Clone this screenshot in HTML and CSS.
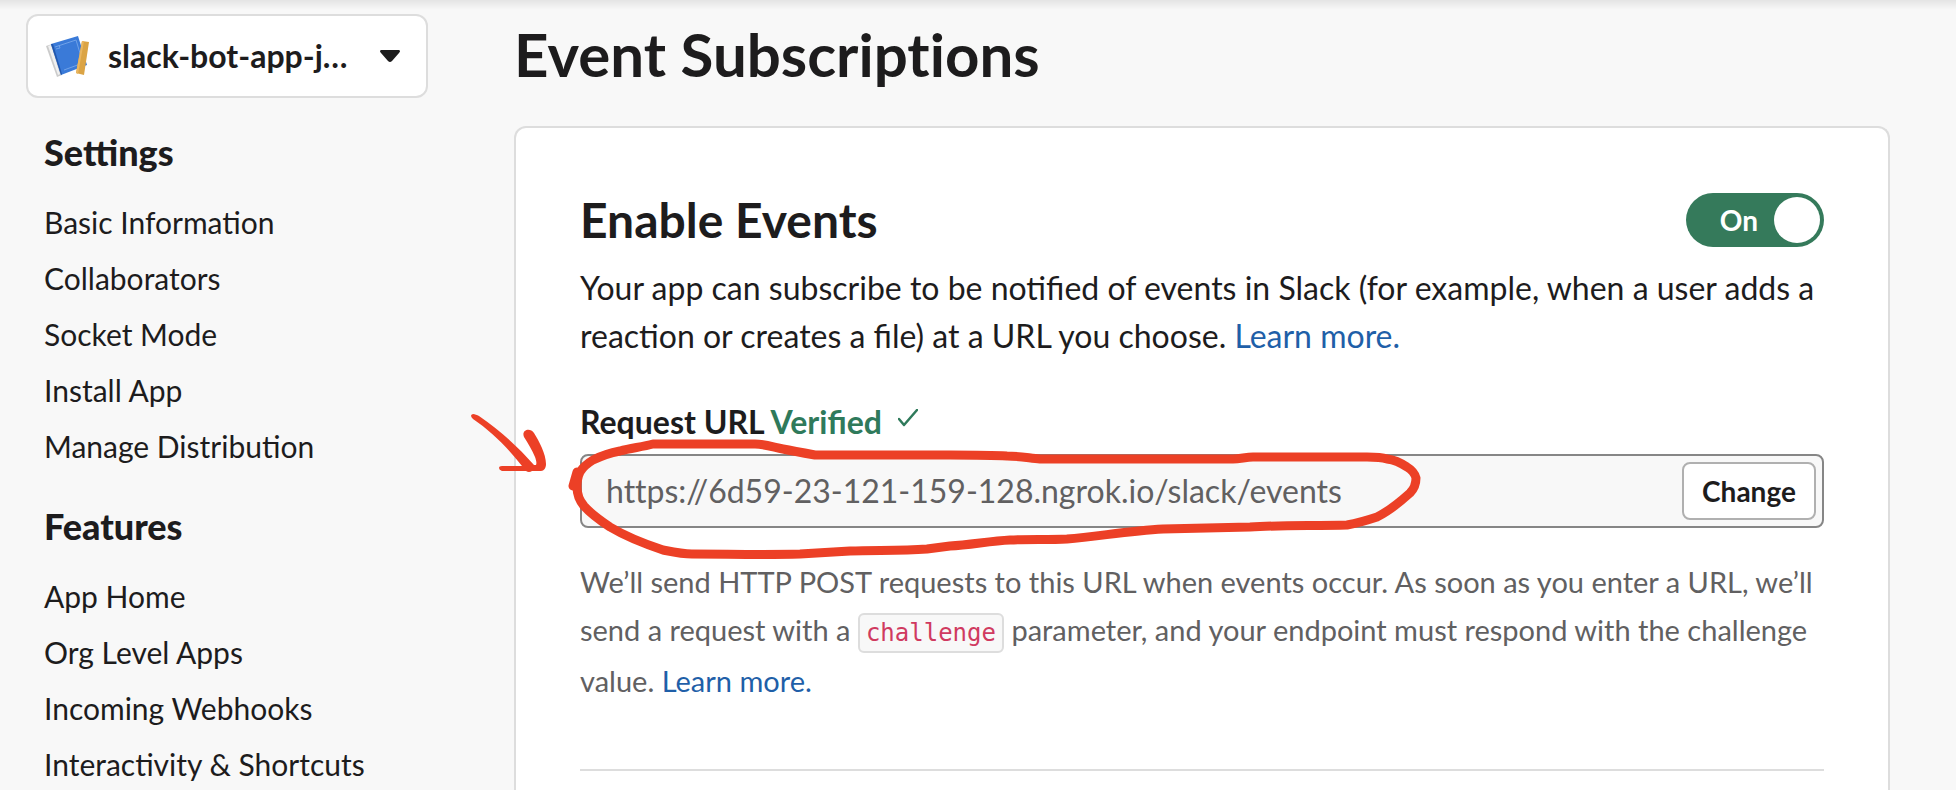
FILE: index.html
```html
<!DOCTYPE html>
<html lang="en">
<head>
<meta charset="utf-8">
<title>Event Subscriptions</title>
<link rel="stylesheet" href="styles.css">
</head>
<body>
<div class="layout">
  <aside class="sidebar">
    <button class="app-picker" type="button" aria-haspopup="listbox">
      <svg class="app-picker-icon" viewBox="0 0 44 44" aria-hidden="true">
        <path d="M0 12 L6 10 L16 41 L11 43 Z" fill="#cbcbcb"/>
        <path d="M2 12 L5 11 L14 40 L12 41 Z" fill="#f0f0f0"/>
        <path d="M5 10 L32 2 L41 31 L15 41 Z" fill="#3a7ad8"/>
        <path d="M5 10 L7 10 L16 40 L15 41 Z" fill="#2257ad"/>
        <path d="M9 13 L30 6 L37 29 L18 36 M10 15 L14 14 L13 11" fill="none" stroke="#6fa1e8" stroke-width="1"/>
        <path d="M36 7 L43 8 L38 41 L30 39 Z" fill="#dba445"/>
        <path d="M36 7 L38 7 L32 40 L30 39 Z" fill="#e9b660"/>
      </svg>
      <span class="app-picker-name">slack-bot-app-j…</span>
      <svg class="app-picker-caret" viewBox="0 0 20 12" aria-hidden="true">
        <path d="M1 0 H19 Q21 1 19 3 L12 11 Q10 13 8 11 L1 3 Q-1 1 1 0 Z" fill="#1d1c1d"/>
      </svg>
    </button>
    <nav class="nav">
      <section class="nav-group">
        <h2 class="nav-title">Settings</h2>
        <ul class="nav-list">
          <li><a href="#">Basic Information</a></li>
          <li><a href="#">Collaborators</a></li>
          <li><a href="#">Socket Mode</a></li>
          <li><a href="#">Install App</a></li>
          <li><a href="#">Manage Distribution</a></li>
        </ul>
      </section>
      <section class="nav-group">
        <h2 class="nav-title">Features</h2>
        <ul class="nav-list">
          <li><a href="#">App Home</a></li>
          <li><a href="#">Org Level Apps</a></li>
          <li><a href="#">Incoming Webhooks</a></li>
          <li><a href="#">Interactivity &amp; Shortcuts</a></li>
        </ul>
      </section>
    </nav>
  </aside>

  <main class="main">
    <h1 class="page-title">Event Subscriptions</h1>
    <section class="card">
      <header class="card-header">
        <h2 class="card-title">Enable Events</h2>
        <button class="toggle" type="button" role="switch" aria-checked="true" aria-label="Enable Events">
          <span class="toggle-text">On</span>
          <span class="toggle-knob"></span>
        </button>
      </header>
      <p class="intro">Your app can subscribe to be notified of events in Slack (for example, when a user adds a reaction or creates a file) at a URL you choose. <a class="link" href="#">Learn more.</a></p>

      <div class="field">
        <div class="field-label">
          <label for="request-url">Request URL</label>
          <span class="verified">Verified</span>
          <svg class="check" viewBox="0 0 20 18" aria-hidden="true">
            <path d="M1 10 L6 16 L19 1" fill="none" stroke="#2f7a5b" stroke-width="2.5" stroke-linecap="round" stroke-linejoin="round"/>
          </svg>
        </div>
        <div class="url-box">
          <input class="url-input" id="request-url" type="text" value="https://6d59-23-121-159-128.ngrok.io/slack/events" readonly>
          <button class="change" type="button">Change</button>
          <svg class="markup" viewBox="456 390 984 180" aria-hidden="true">
            <path class="markup-line" d="M577 472 L573 486 M580 472 C577 478 577 482 577 487 C577 494 579 500 584 506 C591 514 601 521 610 527 C625 536 645 544 663 550 C673 552 682 554 692 554 C728 554 764 555 800 554 C817 553 833 552 850 551 C876 550 900 551 927 549 L950 546 C970 545 990 541 1010 540 C1030 539 1048 540 1067 539 C1100 536 1130 531 1163 529 L1250 527 C1282 525 1315 526 1347 525 C1358 523 1368 520 1377 517 C1389 511 1400 502 1410 493 C1414 489 1416 484 1416 478 C1415 474 1412 470 1407 467 C1401 463 1395 460 1387 459 C1381 457 1374 457 1367 457 L1253 457 C1246 457 1240 459 1233 459 L1040 459 C1029 458 1018 456 1007 456 C990 455 970 455 950 455 L815 455 C804 453 793 451 783 449 C773 447 764 444 755 444 L653 444 C642 447 631 448 620 451 C610 453 601 456 593 460 C588 463 583 467 580 472"/>
            <path class="markup-fill" d="M473 414 C475 414 477 415 479 416 C500 430 520 449 534 465 H536 C537 463 536 460 535 457 C532 450 528 443 524 437 C521 430 530 427 534 433 C539 441 546 454 546 464 C546 468 544 471 541 471 H532 Q529 473 526 471 H502 Q499 470 499 468 Q499 466 502 466 H522 C508 448 491 431 473 419 Q469 415 473 414 Z"/>
          </svg>
        </div>
      </div>

      <p class="help">We’ll send HTTP POST requests to this URL when events occur. As soon as you enter a URL, we’ll send a request with a <code class="code">challenge</code> parameter, and your endpoint must respond with the challenge value. <a class="link" href="#">Learn more.</a></p>
      <hr class="divider">
    </section>
  </main>
</div>
</body>
</html>
```
FILE: styles.css
```css
*, *::before, *::after { box-sizing: border-box; }
html { scrollbar-width: none; }
body {
  margin: 0;
  background: #f8f8f8;
  color: #1d1c1d;
  font-family: Lato, "Open Sans", sans-serif;
  font-size: 32px;
  line-height: 48px;
}
h1, h2, p, ul { margin: 0; padding: 0; }
button, input { font: inherit; color: inherit; }
a { color: inherit; text-decoration: none; }

.layout {
  display: flex;
  gap: 86px;
  min-height: 100vh;
  padding: 14px 66px 0 26px;
  background: linear-gradient(#e4e4e4, #f8f8f8 10px);
}
.sidebar { flex: 0 0 402px; }
.app-picker {
  display: flex;
  align-items: center;
  width: 100%;
  height: 84px;
  padding: 0 26px 0 18px;
  border: 2px solid #dddddd;
  border-radius: 12px;
  background: #ffffff;
  font-weight: 700;
  text-align: left;
}
.app-picker-icon { flex: none; width: 44px; height: 44px; }
.app-picker-name { margin: 0 auto 0 18px; white-space: nowrap; }
.app-picker-caret { flex: none; width: 20px; height: 12px; }

.nav { padding: 30px 18px 0; }
.nav-group + .nav-group { margin-top: 28px; }
.nav-title {
  margin-bottom: 18px;
  font-size: 36px;
  font-weight: 900;
  line-height: 48px;
}
.nav-list { list-style: none; font-size: 30px; line-height: 56px; }

.main {
  display: flex;
  flex: 1;
  flex-direction: column;
  min-width: 0;
}
.page-title {
  margin-bottom: 32px;
  font-size: 60px;
  font-weight: 700;
  line-height: 80px;
  font-variant-ligatures: none;
}
.card {
  flex: 1;
  padding: 60px 64px 0;
  border: 2px solid #dddddd;
  border-bottom: 0;
  border-radius: 12px 12px 0 0;
  background: #ffffff;
}
.card-header { display: flex; justify-content: space-between; align-items: center; }
.card-title { font-size: 48px; font-weight: 700; line-height: 64px; }
.toggle {
  display: flex;
  align-items: center;
  justify-content: flex-end;
  gap: 16px;
  width: 138px;
  height: 54px;
  padding: 4px;
  border: 0;
  border-radius: 27px;
  background: #357a5b;
  color: #ffffff;
  font-size: 28px;
  font-weight: 700;
}
.toggle-knob { width: 46px; height: 46px; border-radius: 50%; background: #ffffff; }
.intro { margin-top: 12px; }
.link { color: #1f5fa8; }

.field { margin-top: 38px; }
.field-label { display: flex; align-items: center; gap: 6px; font-weight: 700; }
.verified { color: #2f7a5b; }
.check { width: 20px; height: 18px; margin: 0 0 8px 10px; }
.url-box {
  position: relative;
  display: flex;
  align-items: center;
  height: 74px;
  margin-top: 8px;
  padding: 0 6px 0 24px;
  border: 2px solid #868686;
  border-radius: 8px;
  background: #f8f8f8;
}
.url-input {
  flex: 1;
  min-width: 0;
  padding: 0;
  border: 0;
  outline: 0;
  background: transparent;
  color: #616061;
  font-variant-ligatures: none;
}
.change {
  width: 134px;
  height: 58px;
  padding: 0;
  border: 2px solid #b0b0b0;
  border-radius: 8px;
  background: #ffffff;
  font-size: 28px;
  font-weight: 700;
}
.markup {
  position: absolute;
  top: -66px;
  left: -126px;
  width: 984px;
  height: 180px;
  pointer-events: none;
}
.markup-line {
  fill: none;
  stroke: #ec4026;
  stroke-width: 9px;
  stroke-linecap: round;
  stroke-linejoin: round;
}
.markup-fill { fill: #ec4026; }
.help { margin-top: 30px; color: #616061; font-size: 29px; }
.code {
  padding: 4px 6px;
  border: 2px solid #dddddd;
  border-radius: 6px;
  background: #f8f8f8;
  color: #d03a60;
  font-family: "DejaVu Sans Mono", monospace;
  font-size: 24px;
}
.divider { margin: 64px 0 0; border: 0; border-top: 2px solid #dddddd; }
```
